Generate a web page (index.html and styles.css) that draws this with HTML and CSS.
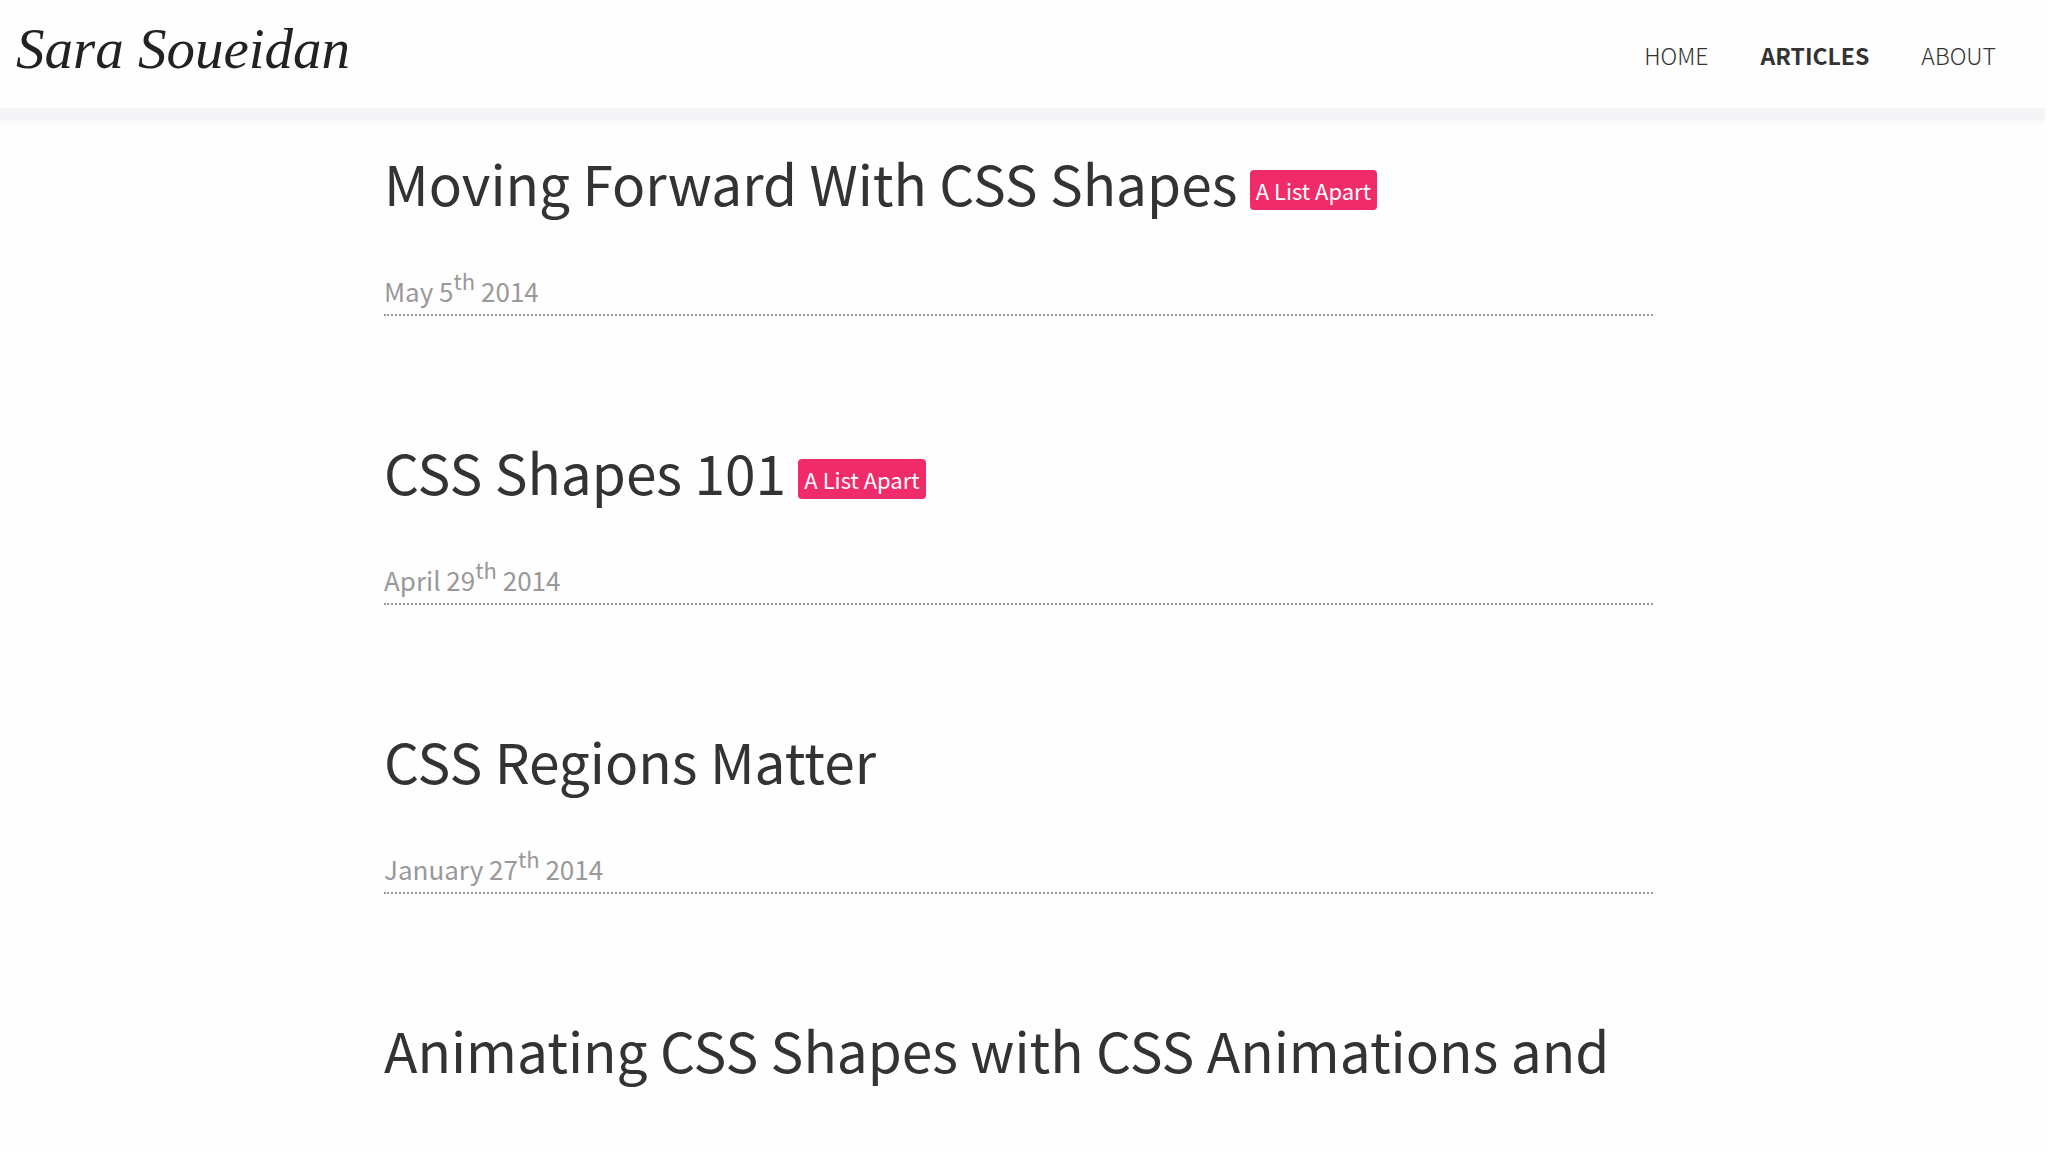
FILE: index.html
```
<!DOCTYPE html>
<html lang="en">

<head>
    <meta charset="UTF-8">
    <meta name="viewport" content="width=device-width, initial-scale=1.0">
    <title>Articles - Sara Soueidan</title>
    <link rel="stylesheet" href="styles.css">
</head>

<body>
    <header class="site-header">
        <a class="logo" href="#">Sara Soueidan</a>
        <nav class="site-nav">
            <a href="#">Home</a>
            <a href="#" class="active">Articles</a>
            <a href="#">About</a>
        </nav>
    </header>

    <main class="articles">
        <article>
            <h1><a href="#">Moving Forward With CSS Shapes</a> <span class="label">A List Apart</span></h1>
            <p class="date">May 5<sup>th</sup> 2014</p>
        </article>

        <article>
            <h1><a href="#">CSS Shapes 101</a> <span class="label">A List Apart</span></h1>
            <p class="date">April 29<sup>th</sup> 2014</p>
        </article>

        <article>
            <h1><a href="#">CSS Regions Matter</a></h1>
            <p class="date">January 27<sup>th</sup> 2014</p>
        </article>

        <article>
            <h1><a href="#">Animating CSS Shapes with CSS Animations and</a></h1>
        </article>
    </main>
</body>

</html>
```
FILE: styles.css
```
/* Global styles */
* {
    padding: 0;
    margin: 0;
    box-sizing: border-box;
}

body {
    font-family: "Noto Sans CJK JP", "Open Sans", sans-serif;
    background-color: #fefefe;
    color: #333;
}

a {
    color: inherit;
    text-decoration: none;
}

/* Header */
.site-header {
    display: flex;
    justify-content: space-between;
    align-items: center;
    height: 120px;
    margin-right: 3px;
    padding: 0 49px 10px 16px;
    border-bottom: 12px solid #f4f3f5;
    box-shadow: 0 4px 0 #fbfafb;
}

.logo {
    font-family: "Liberation Serif", serif;
    font-style: italic;
    font-size: 57px;
    line-height: 60px;
    color: #222;
}

.site-nav {
    display: flex;
    gap: 52px;
    padding-top: 12px;
    font-size: 23px;
    line-height: 32px;
    font-weight: 300;
    text-transform: uppercase;
}

.site-nav .active {
    font-weight: 700;
}

/* Article list */
.articles {
    padding: 22px 395px 0 384px;
}

article {
    margin-bottom: 115px;
}

article:last-child {
    margin-bottom: 0;
}

h1 {
    font-size: 55px;
    line-height: 80px;
    font-weight: 400;
}

.label {
    display: inline-block;
    padding: 0 6px;
    border-radius: 4px;
    background-color: #ef2b69;
    color: #fff;
    font-size: 22px;
    line-height: 40px;
    vertical-align: 6px;
}

.date {
    margin-top: 50px;
    padding-bottom: 4px;
    border-bottom: 2px dotted #999;
    color: #999;
    font-size: 26px;
    line-height: 38px;
}

sup {
    font-size: 22px;
    line-height: 0;
    vertical-align: 12px;
}
```
